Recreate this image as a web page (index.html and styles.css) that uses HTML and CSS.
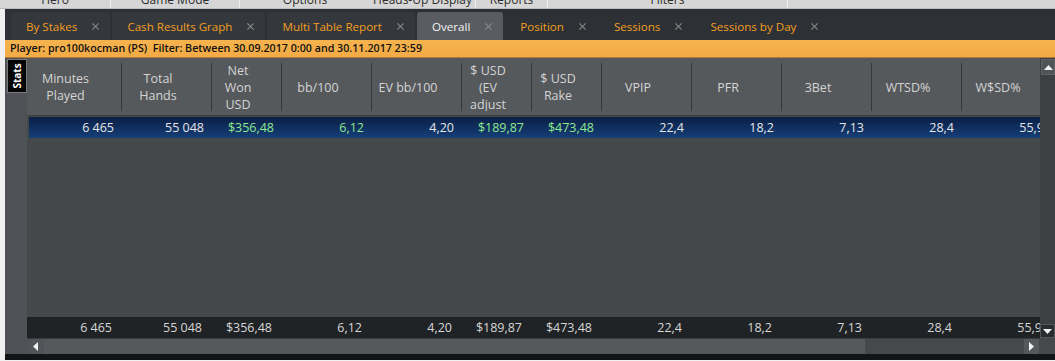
FILE: index.html
```html
<!DOCTYPE html>
<html lang="en">
<head>
    <meta charset="UTF-8">
    <title>Overall Report</title>
    <link rel="stylesheet" href="styles.css">
</head>
<body>
    <div class="menubar">
        <div class="menu-item w-hero">Hero</div>
        <div class="menu-item w-mode">Game Mode</div>
        <div class="menu-item w-options">Options</div>
        <div class="menu-item w-hud no-sep">Heads-Up Display</div>
        <div class="menu-item w-reports">Reports</div>
        <div class="menu-item w-filters">Filters</div>
        <div class="menu-item w-rest"></div>
    </div>

    <div class="app">
        <div class="tabbar">
            <div class="tab">By Stakes <span class="close"></span></div>
            <div class="tab">Cash Results Graph <span class="close"></span></div>
            <div class="tab">Multi Table Report <span class="close"></span></div>
            <div class="tab active">Overall <span class="close"></span></div>
            <div class="tab flat">Position <span class="close"></span></div>
            <div class="tab flat">Sessions <span class="close"></span></div>
            <div class="tab flat">Sessions by Day <span class="close"></span></div>
        </div>

        <div class="filterbar">Player: pro100kocman (PS)&nbsp;&nbsp;Filter: Between 30.09.2017 0:00 and 30.11.2017 23:59</div>

        <div class="main">
            <div class="side">
                <div class="side-tab"><span>Stats</span></div>
            </div>

            <div class="grid-area">
                <div class="viewport">
                    <div class="cols header">
                        <div class="hcell">Minutes<br>Played</div>
                        <div class="hcell">Total<br>Hands</div>
                        <div class="hcell">Net<br>Won<br>USD</div>
                        <div class="hcell">bb/100</div>
                        <div class="hcell">EV bb/100</div>
                        <div class="hcell">$ USD<br>(EV<br>adjust</div>
                        <div class="hcell">$ USD<br>Rake</div>
                        <div class="hcell">VPIP</div>
                        <div class="hcell">PFR</div>
                        <div class="hcell">3Bet</div>
                        <div class="hcell">WTSD%</div>
                        <div class="hcell">W$SD%</div>
                    </div>

                    <div class="cols row selected">
                        <div class="cell">6 465</div>
                        <div class="cell">55 048</div>
                        <div class="cell money">$356,48</div>
                        <div class="cell money">6,12</div>
                        <div class="cell">4,20</div>
                        <div class="cell money">$189,87</div>
                        <div class="cell money">$473,48</div>
                        <div class="cell">22,4</div>
                        <div class="cell">18,2</div>
                        <div class="cell">7,13</div>
                        <div class="cell">28,4</div>
                        <div class="cell">55,9</div>
                    </div>

                    <div class="filler"></div>

                    <div class="cols row total">
                        <div class="cell">6 465</div>
                        <div class="cell">55 048</div>
                        <div class="cell">$356,48</div>
                        <div class="cell">6,12</div>
                        <div class="cell">4,20</div>
                        <div class="cell">$189,87</div>
                        <div class="cell">$473,48</div>
                        <div class="cell">22,4</div>
                        <div class="cell">18,2</div>
                        <div class="cell">7,13</div>
                        <div class="cell">28,4</div>
                        <div class="cell">55,9</div>
                    </div>
                </div>

                <div class="vscroll">
                    <div class="sbtn up"><svg width="9" height="5" viewBox="0 0 9 5"><path d="M0 5 L4.5 0 L9 5 Z" fill="#f2f2f2"/></svg></div>
                    <div class="vtrack"></div>
                    <div class="sbtn down"><svg width="9" height="5" viewBox="0 0 9 5"><path d="M0 0 L4.5 5 L9 0 Z" fill="#f2f2f2"/></svg></div>
                </div>

                <div class="hscroll">
                    <div class="sbtn left"><svg width="5" height="9" viewBox="0 0 5 9"><path d="M5 0 L0 4.5 L5 9 Z" fill="#f2f2f2"/></svg></div>
                    <div class="hthumb"></div>
                    <div class="htrack"></div>
                    <div class="sbtn right"><svg width="5" height="9" viewBox="0 0 5 9"><path d="M0 0 L5 4.5 L0 9 Z" fill="#f2f2f2"/></svg></div>
                </div>

                <div class="corner"></div>
            </div>
        </div>

        <div class="bottombar"></div>
    </div>
</body>
</html>
```

FILE: styles.css
```css
body {
    margin: 0;
    background-color: #f0f0f0;
    font-family: "Open Sans", Arial, sans-serif;
    overflow: hidden;
}

/* top menu, mostly scrolled out of view */
.menubar {
    display: flex;
    height: 8px;
    overflow: hidden;
    background-color: #d6d6d6;
    border-bottom: 1px solid #bcbcbc;
}

.menu-item {
    flex: none;
    margin-top: -8px;
    font-size: 12px;
    line-height: 16px;
    color: #2e2e2e;
    text-align: center;
    border-left: 1px solid #eeeeee;
    box-sizing: border-box;
    height: 20px;
}

.menu-item.no-sep {
    border-left: none;
}

.w-hero { width: 110px; border-left: none; }
.w-mode { width: 129px; }
.w-options { width: 131px; }
.w-hud { width: 105px; }
.w-reports { width: 72px; }
.w-filters { width: 240px; }
.w-rest { flex: 1; }

.app {
    margin-left: 5px;
}

/* report tabs */
.tabbar {
    display: flex;
    gap: 2px;
    height: 31px;
    padding: 3px 0 0 6px;
    box-sizing: border-box;
    background-color: #2d3135;
}

.tab {
    display: flex;
    align-items: center;
    gap: 15px;
    height: 28px;
    padding: 0 11px 0 15px;
    font-size: 11.6px;
    color: #f29e22;
    background-color: #34383c;
    border-radius: 3px 3px 0 0;
    white-space: nowrap;
}

.tab.flat {
    background-color: #2d3135;
}

.tab.active {
    background-color: #595c60;
    color: #f2f2f2;
}

.close {
    position: relative;
    width: 7px;
    height: 7px;
}

.close::before,
.close::after {
    content: "";
    position: absolute;
    left: -1px;
    top: 3px;
    width: 9px;
    height: 1px;
    background-color: #8c8c8c;
    transform: rotate(45deg);
}

.close::after {
    transform: rotate(-45deg);
}

.filterbar {
    height: 17px;
    padding-left: 5px;
    background: linear-gradient(#f6b44e, #f2aa45);
    border-bottom: 1px solid #b07a30;
    font-size: 10.7px;
    font-weight: 600;
    line-height: 17px;
    color: #111111;
    white-space: nowrap;
}

/* grid area */
.main {
    display: flex;
    height: 296px;
}

.side {
    width: 22px;
    flex: none;
    background-color: #4e5155;
    padding: 1px 0 0 2px;
    box-sizing: border-box;
}

.side-tab {
    width: 20px;
    height: 34px;
    box-sizing: border-box;
    background-color: #050505;
    border: 1px solid #7a7a7a;
    display: flex;
    align-items: center;
    justify-content: center;
}

.side-tab span {
    transform: rotate(-90deg);
    font-size: 10px;
    font-weight: 700;
    color: #ffffff;
    line-height: 10px;
}

.grid-area {
    flex: 1;
    display: grid;
    grid-template-columns: 1fr 15px;
    grid-template-rows: 1fr 16px;
    min-width: 0;
}

.viewport {
    display: flex;
    flex-direction: column;
    overflow: hidden;
    background-color: #45484b;
    min-width: 0;
}

.cols {
    display: grid;
    grid-template-columns: 95px 90px 70px 90px 90px 70px 70px 90px 90px 90px 90px 90px;
    flex: none;
}

.header {
    background-color: #56595c;
    padding: 5px 0 4px;
    border-bottom: 1px solid #3b3e41;
}

.hcell {
    height: 48px;
    display: flex;
    align-items: center;
    justify-content: center;
    padding-right: 17px;
    box-sizing: border-box;
    border-right: 1px solid #35383b;
    font-size: 12.5px;
    line-height: 17px;
    color: #d4d4d4;
    text-align: center;
    overflow: hidden;
}

.row {
    height: 21px;
    font-size: 12.5px;
    line-height: 21px;
}

.cell {
    text-align: right;
    padding-right: 10px;
    white-space: nowrap;
}

.selected {
    margin-top: 1px;
    margin-left: 2px;
    margin-right: -2px;
    background: linear-gradient(#0a1f46, #163f78);
    color: #e6e6e6;
}

.selected .money {
    color: #8ee88e;
}

.filler {
    flex: 1;
}

.total {
    background-color: #202326;
    color: #d6d6d6;
}

/* scrollbars */
.vscroll {
    display: flex;
    flex-direction: column;
    background-color: #3d4043;
}

.vtrack {
    flex: 1;
}

.sbtn {
    display: flex;
    align-items: center;
    justify-content: center;
    box-sizing: border-box;
    flex: none;
}

.sbtn.up {
    height: 16px;
    margin: 1px 0 0 1px;
    background-color: #515457;
    border: 1px solid #606366;
}

.sbtn.down {
    height: 14px;
    background-color: #2a2d30;
    border: 1px solid #54575a;
}

.hscroll {
    display: flex;
    background-color: #46494c;
    border-top: 1px solid #3a3d40;
    min-width: 0;
}

.sbtn.left {
    width: 17px;
    background-color: #505357;
}

.sbtn.right {
    width: 15px;
    margin-right: 1px;
    background-color: #56595c;
}

.hthumb {
    width: 821px;
    background-color: #56595c;
}

.htrack {
    flex: 1;
}

.corner {
    background-color: #46494c;
}

.bottombar {
    height: 6px;
    background-color: #121416;
}
```
